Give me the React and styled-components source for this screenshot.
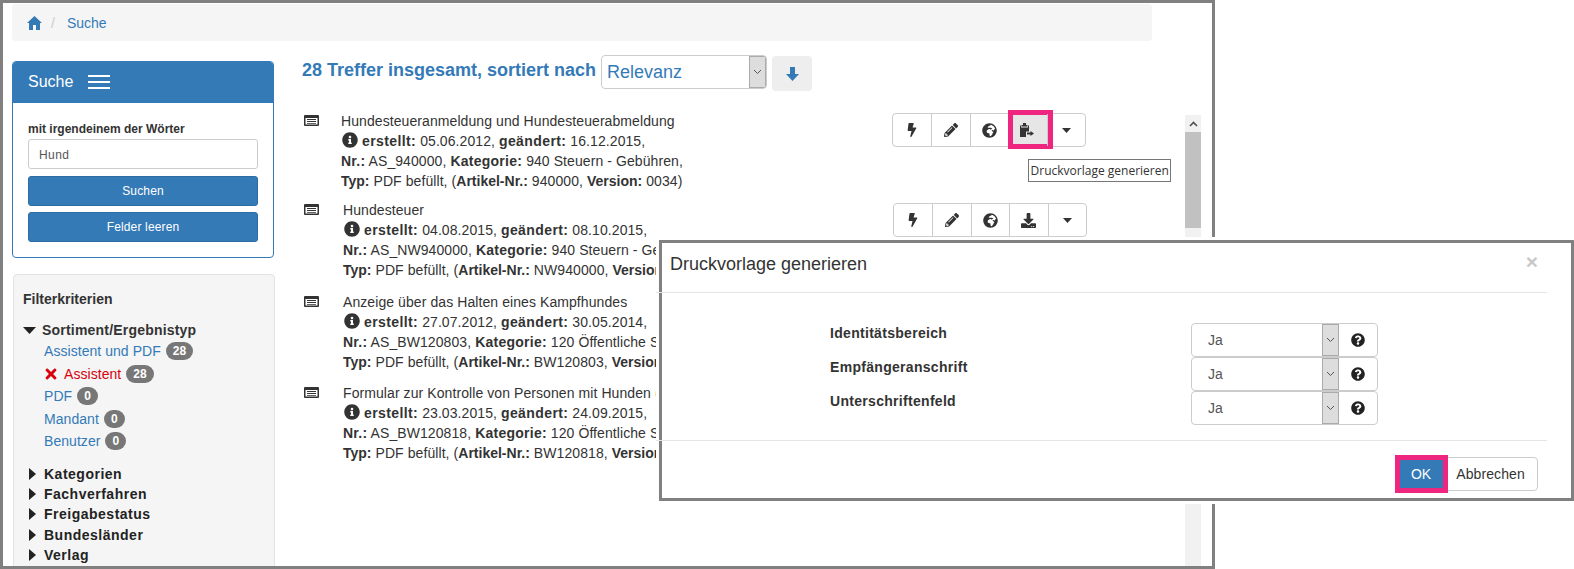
import React from 'react';
import styled, { createGlobalStyle } from 'styled-components';
import {
	FaPencilAlt,
	FaBolt,
	FaGlobeAfrica,
	FaDownload,
	FaInfoCircle,
	FaQuestionCircle,
	FaTimes,
} from 'react-icons/fa';

const GlobalStyle = createGlobalStyle`
	html, body { margin: 0; padding: 0; background: #fff; }
	body {
		font-family: 'Liberation Sans', Arial, sans-serif;
		font-size: 14px;
		line-height: 20px;
		color: #333;
	}
	* { box-sizing: border-box; }
`;

const results = [
	{
		title: 'Hundesteueranmeldung und Hundesteuerabmeldung',
		created: '05.06.2012',
		changed: '16.12.2015',
		nr: 'AS_940000',
		cat: '940 Steuern - Gebühren,',
		art: '940000',
		version: '0034)',
		x: 0,
		gap: 9,
	},
	{
		title: 'Hundesteuer',
		created: '04.08.2015',
		changed: '08.10.2015',
		nr: 'AS_NW940000',
		cat: '940 Steuern - Gebühren,',
		art: 'NW940000',
		version: '0034)',
		x: 2,
		gap: 12,
	},
	{
		title: 'Anzeige über das Halten eines Kampfhundes',
		created: '27.07.2012',
		changed: '30.05.2014',
		nr: 'AS_BW120803',
		cat: '120 Öffentliche Sicherheit,',
		art: 'BW120803',
		version: '0012)',
		x: 2,
		gap: 11,
	},
	{
		title: 'Formular zur Kontrolle von Personen mit Hunden (Muster)',
		created: '23.03.2015',
		changed: '24.09.2015',
		nr: 'AS_BW120818',
		cat: '120 Öffentliche Sicherheit,',
		art: 'BW120818',
		version: '0012)',
		x: 2,
		gap: 0,
	},
];

const facets = [
	{ label: 'Assistent und PDF', count: 28 },
	{ label: 'Assistent', count: 28, active: true },
	{ label: 'PDF', count: 0 },
	{ label: 'Mandant', count: 0 },
	{ label: 'Benutzer', count: 0 },
];

const HomeIcon = () => (
	<svg width="15" height="14" viewBox="0 0 15 14">
		<path fill="#337ab7" d="M7.500 0L15 7h-2v7H9V9H6v5H2V7H0z" />
	</svg>
);

const ListIcon = () => (
	<svg width="15" height="11" viewBox="0 0 15 11">
		<path
			fill="#333"
			fillRule="evenodd"
			d="M1 0h13a1 1 0 0 1 1 1v9a1 1 0 0 1-1 1H1a1 1 0 0 1-1-1V1a1 1 0 0 1 1-1zM1.500 3v6.500h12V3zM3 4h9v1H3zM3 6h9v1H3zM3 8h9v.8H3z"
		/>
	</svg>
);

const ClipboardIcon = () => (
	<svg width="15" height="15" viewBox="0 0 15 15">
		<path fill="#333" d="M3 0h3v2h1.500v1.500h-6V2H3zM0 2.500h1v2h7v-2h1V8.500H6V14H0z" />
		<path fill="#333" d="M7 9.500h3.500V8l3.500 2.500L10.500 13v-1.500H7z" />
	</svg>
);

const Chevron = () => (
	<svg width="9" height="6" viewBox="0 0 9 6">
		<path d="M1 1l3.500 3.500L8 1" fill="none" stroke="#555" strokeWidth="1" />
	</svg>
);

const TriangleDown = () => (
	<svg width="13" height="7" viewBox="0 0 13 7">
		<path fill="#222" d="M0 0h13L6.500 7z" />
	</svg>
);

const TriangleRight = () => (
	<svg width="7" height="12" viewBox="0 0 7 12">
		<path fill="#222" d="M0 0l7 6-7 6z" />
	</svg>
);

const SmallCaret = () => (
	<svg width="9" height="5" viewBox="0 0 9 5">
		<path fill="#333" d="M0 0h9L4.500 5z" />
	</svg>
);

const App = () => (
	<>
		<GlobalStyle />
		<Canvas>
			<Frame>
				<Breadcrumb>
					<HomeIcon />
					<Slash>/</Slash>
					<Crumb>Suche</Crumb>
				</Breadcrumb>
				<Columns>
					<Sidebar>
						<SearchPanel>
							<SearchHead>
								Suche
								<Burger>
									<span />
									<span />
									<span />
								</Burger>
							</SearchHead>
							<SearchBody>
								<FieldLabel>mit irgendeinem der Wörter</FieldLabel>
								<TextField>Hund</TextField>
								<BlockButton>Suchen</BlockButton>
								<BlockButton>Felder leeren</BlockButton>
							</SearchBody>
						</SearchPanel>
						<FilterWell>
							<FilterTitle>Filterkriterien</FilterTitle>
							<FacetOpen>
								<TriangleDown />
								<span>Sortiment/Ergebnistyp</span>
							</FacetOpen>
							<FacetList>
								{facets.map((f) => (
									<FacetItem key={f.label} $active={f.active}>
										{f.active && <FaTimes size={16} />}
										<span>{f.label}</span>
										<Badge>{f.count}</Badge>
									</FacetItem>
								))}
							</FacetList>
							{['Kategorien', 'Fachverfahren', 'Freigabestatus', 'Bundesländer', 'Verlag'].map((t) => (
								<FacetClosed key={t}>
									<TriangleRight />
									<span>{t}</span>
								</FacetClosed>
							))}
						</FilterWell>
					</Sidebar>
					<Content>
						<HitsBar>
							<HitsTitle>28 Treffer insgesamt, sortiert nach</HitsTitle>
							<SortSelect>
								<span>Relevanz</span>
								<SelectArrow>
									<Chevron />
								</SelectArrow>
							</SortSelect>
							<SortButton>
								<svg width="13" height="14" viewBox="0 0 13 14">
									<path fill="#337ab7" d="M4 0h5v7h4l-6.500 7L0 7h4z" />
								</svg>
							</SortButton>
						</HitsBar>
						<ResultArea>
							<ResultList>
								{results.map((r, i) => (
									<Result key={r.title} $gap={r.gap}>
										<ResultIcon>
											<ListIcon />
										</ResultIcon>
										<ResultText $x={r.x} $clipped={i > 0}>
											<MetaLine>{r.title}</MetaLine>
											<MetaLine $bold={0.4}>
												<FaInfoCircle size={16} />{' '}
												<b>erstellt:</b> {r.created}, <b>geändert:</b> {r.changed},
											</MetaLine>
											<MetaLine $bold={0.25}>
												<b>Nr.:</b> {r.nr}, <b>Kategorie:</b> {r.cat}
											</MetaLine>
											<MetaLine>
												<b>Typ:</b> PDF befüllt, (<b>Artikel-Nr.:</b> {r.art}, <b>Version:</b> {r.version}
											</MetaLine>
										</ResultText>
										<ButtonGroup $x={i === 0 ? 0 : 1}>
											<GroupButton>
												<FaBolt size={14} />
											</GroupButton>
											<GroupButton>
												<FaPencilAlt size={14} />
											</GroupButton>
											<GroupButton>
												<FaGlobeAfrica size={15} />
											</GroupButton>
											{i === 0 ? (
												<GroupButton $marked>
													<ClipboardIcon />
													<Tooltip>Druckvorlage generieren</Tooltip>
												</GroupButton>
											) : (
												<GroupButton>
													<FaDownload size={15} />
												</GroupButton>
											)}
											<GroupButton>
												<SmallCaret />
											</GroupButton>
										</ButtonGroup>
									</Result>
								))}
							</ResultList>
							<Scrollbar>
								<ScrollUp>
									<svg width="9" height="6" viewBox="0 0 9 6">
										<path d="M1 5l3.500-3.500L8 5" fill="none" stroke="#505050" strokeWidth="1.600" />
									</svg>
								</ScrollUp>
								<ScrollThumb />
							</Scrollbar>
						</ResultArea>
					</Content>
				</Columns>
			</Frame>
			<Modal>
				<ModalHead>
					<ModalTitle>Druckvorlage generieren</ModalTitle>
					<CloseMark>×</CloseMark>
				</ModalHead>
				<Divider />
				<ModalBody>
					{['Identitätsbereich', 'Empfängeranschrift', 'Unterschriftenfeld'].map((l) => (
						<OptionRow key={l}>
							<OptionLabel>{l}</OptionLabel>
							<OptionControl>
								<OptionValue>Ja</OptionValue>
								<OptionArrow>
									<Chevron />
								</OptionArrow>
								<OptionHelp>
									<FaQuestionCircle size={14} />
								</OptionHelp>
							</OptionControl>
						</OptionRow>
					))}
				</ModalBody>
				<Divider />
				<ModalFoot>
					<OkButton>OK</OkButton>
					<CancelButton>Abbrechen</CancelButton>
				</ModalFoot>
			</Modal>
		</Canvas>
	</>
);

export default App;

const Canvas = styled.div`
	position: relative;
	width: 1574px;
	height: 569px;
	overflow: hidden;
`;
const Frame = styled.div`
	width: 1215px;
	height: 569px;
	border: 3px solid #808080;
	padding: 1px 0 0 9px;
	overflow: hidden;
`;
const Breadcrumb = styled.div`
	width: 1140px;
	height: 37px;
	background: #f5f5f5;
	border-radius: 4px;
	display: flex;
	align-items: center;
	padding-left: 15px;
`;
const Slash = styled.span`
	color: #ccc;
	margin: 0 12px 0 9px;
`;
const Crumb = styled.span`
	color: #337ab7;
`;
const Columns = styled.div`
	display: flex;
	margin-top: 20px;
`;
const Sidebar = styled.div`
	width: 263px;
	flex: none;
`;
const SearchPanel = styled.div`
	width: 262px;
	height: 197px;
	border: 1px solid #337ab7;
	border-radius: 4px;
	overflow: hidden;
`;
const SearchHead = styled.div`
	height: 41px;
	background: #337ab7;
	color: #fff;
	font-size: 16px;
	display: flex;
	align-items: center;
	padding: 0 0 2px 15px;
	gap: 15px;
`;
const Burger = styled.div`
	width: 22px;
	display: flex;
	flex-direction: column;
	gap: 4px;
	span {
		height: 2px;
		background: #fff;
	}
`;
const SearchBody = styled.div`
	padding: 18px 15px 0;
`;
const FieldLabel = styled.div`
	font-size: 12px;
	font-weight: 700;
	line-height: 17px;
`;
const TextField = styled.div`
	height: 30px;
	margin: 1px 0 7px;
	border: 1px solid #ccc;
	border-radius: 3px;
	padding: 1px 10px 0;
	font-size: 12px;
	letter-spacing: 0.4px;
	line-height: 28px;
	color: #555;
`;
const BlockButton = styled.div`
	height: 30px;
	margin-bottom: 6px;
	background: #337ab7;
	border: 1px solid #2e6da4;
	border-radius: 3px;
	color: #fff;
	font-size: 12px;
	letter-spacing: 0.15px;
	line-height: 28px;
	text-align: center;
`;
const FilterWell = styled.div`
	width: 262px;
	height: 330px;
	margin: 16px 0 0 1px;
	background: #f5f5f5;
	border: 1px solid #e3e3e3;
	border-radius: 4px;
	padding: 14px 9px 0;
`;
const FilterTitle = styled.div`
	font-weight: 700;
	height: 20px;
`;
const FacetOpen = styled.div`
	display: flex;
	align-items: center;
	gap: 6px;
	margin-top: 11px;
	font-weight: 700;
	letter-spacing: 0.2px;
	color: #333;
`;
const FacetList = styled.div`
	margin: 0 0 11px 21px;
`;
const FacetItem = styled.div`
	display: flex;
	align-items: center;
	height: 22.5px;
	letter-spacing: 0.05px;
	color: ${(p) => (p.$active ? '#d9000d' : '#337ab7')};
	svg {
		margin: 0 5px 0 -1px;
	}
`;
const Badge = styled.span`
	min-width: 21px;
	height: 18px;
	margin-left: 5px;
	padding: 0 7px;
	border-radius: 10px;
	background: #777;
	color: #fff;
	font-size: 12px;
	font-weight: 700;
	line-height: 18px;
	text-align: center;
`;
const FacetClosed = styled.div`
	display: flex;
	align-items: center;
	height: 20.3px;
	padding-left: 6px;
	gap: 8px;
	font-weight: 700;
	letter-spacing: 0.5px;
	color: #222;
`;
const Content = styled.div`
	flex: 1;
	min-width: 0;
	padding-left: 27px;
`;
const HitsBar = styled.div`
	display: flex;
	align-items: flex-start;
	height: 56px;
	margin-top: -6px;
`;
const HitsTitle = styled.div`
	font-size: 18px;
	font-weight: 700;
	color: #337ab7;
	line-height: 20px;
	margin-top: 5px;
	width: 299px;
`;
const SortSelect = styled.div`
	width: 166px;
	height: 34px;
	border: 1px solid #ccc;
	border-radius: 4px;
	font-size: 18px;
	color: #337ab7;
	display: flex;
	align-items: center;
	justify-content: space-between;
	padding-left: 5px;
	overflow: hidden;
`;
const SelectArrow = styled.div`
	width: 17px;
	height: 100%;
	background: #ddd;
	border: 1px solid #aaa;
	display: flex;
	align-items: center;
	justify-content: center;
`;
const SortButton = styled.div`
	width: 40px;
	height: 35px;
	margin: 1px 0 0 5px;
	background: #eee;
	border-radius: 4px;
	display: flex;
	align-items: center;
	justify-content: center;
`;
const ResultArea = styled.div`
	display: flex;
	height: 460px;
	width: 900px;
`;
const ResultList = styled.div`
	width: 883px;
	flex: none;
	padding-right: 99px;
`;
const Result = styled.div`
	display: flex;
	margin-bottom: ${(p) => p.$gap}px;
	height: 80px;
`;
const ResultIcon = styled.div`
	width: 39px;
	flex: none;
	padding: 4px 0 0 2px;
	line-height: 0;
`;
const ResultText = styled.div`
	width: ${(p) => (p.$clipped ? 315 : 551)}px;
	flex: none;
	padding-left: ${(p) => p.$x}px;
	letter-spacing: 0.08px;
	white-space: nowrap;
	overflow: hidden;
	svg {
		vertical-align: -2px;
		margin-left: 1px;
	}
`;
const MetaLine = styled.div`
	b {
		letter-spacing: ${(p) => p.$bold || 0}px;
	}
`;
const ButtonGroup = styled.div`
	display: flex;
	flex: none;
	height: 34px;
	margin: ${(p) => 2 + p.$x}px ${(p) => -p.$x}px 0 auto;
	border: 1px solid #ccc;
	border-radius: 4px;
	background: #fff;
`;
const GroupButton = styled.div`
	position: relative;
	width: 38.4px;
	display: flex;
	align-items: center;
	justify-content: center;
	color: #333;
	background: ${(p) => (p.$marked ? '#e6e6e6' : 'transparent')};
	& + & {
		border-left: 1px solid #ccc;
	}
	${(p) =>
		p.$marked &&
		`&::after {
			content: '';
			position: absolute;
			left: -1px;
			right: -6px;
			top: -4px;
			bottom: -3px;
			border: 5px solid #ee2680;
		}`}
`;
const Tooltip = styled.div`
	position: absolute;
	left: 19px;
	top: 45px;
	width: 143px;
	height: 23px;
	background: #fff;
	border: 1px solid #767676;
	color: #333;
	font-family: 'Open Sans', sans-serif;
	font-size: 12px;
	line-height: 21px;
	text-align: center;
	white-space: nowrap;
	z-index: 2;
`;
const Scrollbar = styled.div`
	width: 16px;
	height: 460px;
	background: #f1f1f1;
	margin-top: 4px;
`;
const ScrollUp = styled.div`
	height: 17px;
	display: flex;
	align-items: center;
	justify-content: center;
`;
const ScrollThumb = styled.div`
	height: 96px;
	background: #c1c1c1;
`;
const Modal = styled.div`
	position: absolute;
	left: 659px;
	top: 240px;
	width: 915px;
	height: 261px;
	background: #fff;
	border: 3px solid #808080;
	box-shadow: 0 0 0 3px #fff;
`;
const ModalHead = styled.div`
	height: 49px;
	padding: 9px 24px 0 8px;
	display: flex;
	justify-content: space-between;
`;
const ModalTitle = styled.div`
	font-size: 18px;
	line-height: 24px;
`;
const CloseMark = styled.div`
	font-size: 21px;
	font-weight: 700;
	line-height: 20px;
	color: #c8c8c8;
	margin-right: 9px;
`;
const Divider = styled.div`
	height: 1px;
	margin: 0 24px 0 -6px;
	background: #e5e5e5;
`;
const ModalBody = styled.div`
	height: 147px;
	padding-top: 30px;
`;
const OptionRow = styled.div`
	display: grid;
	grid-template-columns: 361px 187px;
	height: 34px;
	padding-left: 168px;
`;
const OptionLabel = styled.div`
	font-weight: 700;
	letter-spacing: 0.3px;
	line-height: 20px;
`;
const OptionControl = styled.div`
	display: flex;
	height: 34px;
	border: 1px solid #ccc;
	border-radius: 4px;
	color: #555;
`;
const OptionValue = styled.div`
	flex: 1;
	padding-left: 16px;
	line-height: 32px;
`;
const OptionArrow = styled.div`
	width: 17px;
	background: #ddd;
	border: 1px solid #aaa;
	display: flex;
	align-items: center;
	justify-content: center;
`;
const OptionHelp = styled.div`
	width: 38px;
	color: #222;
	display: flex;
	align-items: center;
	justify-content: center;
`;
const ModalFoot = styled.div`
	display: flex;
	justify-content: flex-end;
	padding: 16px 33px 0 0;
`;
const OkButton = styled.div`
	position: relative;
	width: 44px;
	height: 34px;
	background: #337ab7;
	border-radius: 4px 0 0 4px;
	color: #fff;
	line-height: 34px;
	text-align: center;
	&::after {
		content: '';
		position: absolute;
		left: -4px;
		right: -5px;
		top: -2px;
		bottom: -2px;
		border: 5px solid #ee2680;
	}
`;
const CancelButton = styled.div`
	width: 95px;
	height: 34px;
	border: 1px solid #ccc;
	border-radius: 0 4px 4px 0;
	letter-spacing: 0.1px;
	line-height: 32px;
	text-align: center;
`;
